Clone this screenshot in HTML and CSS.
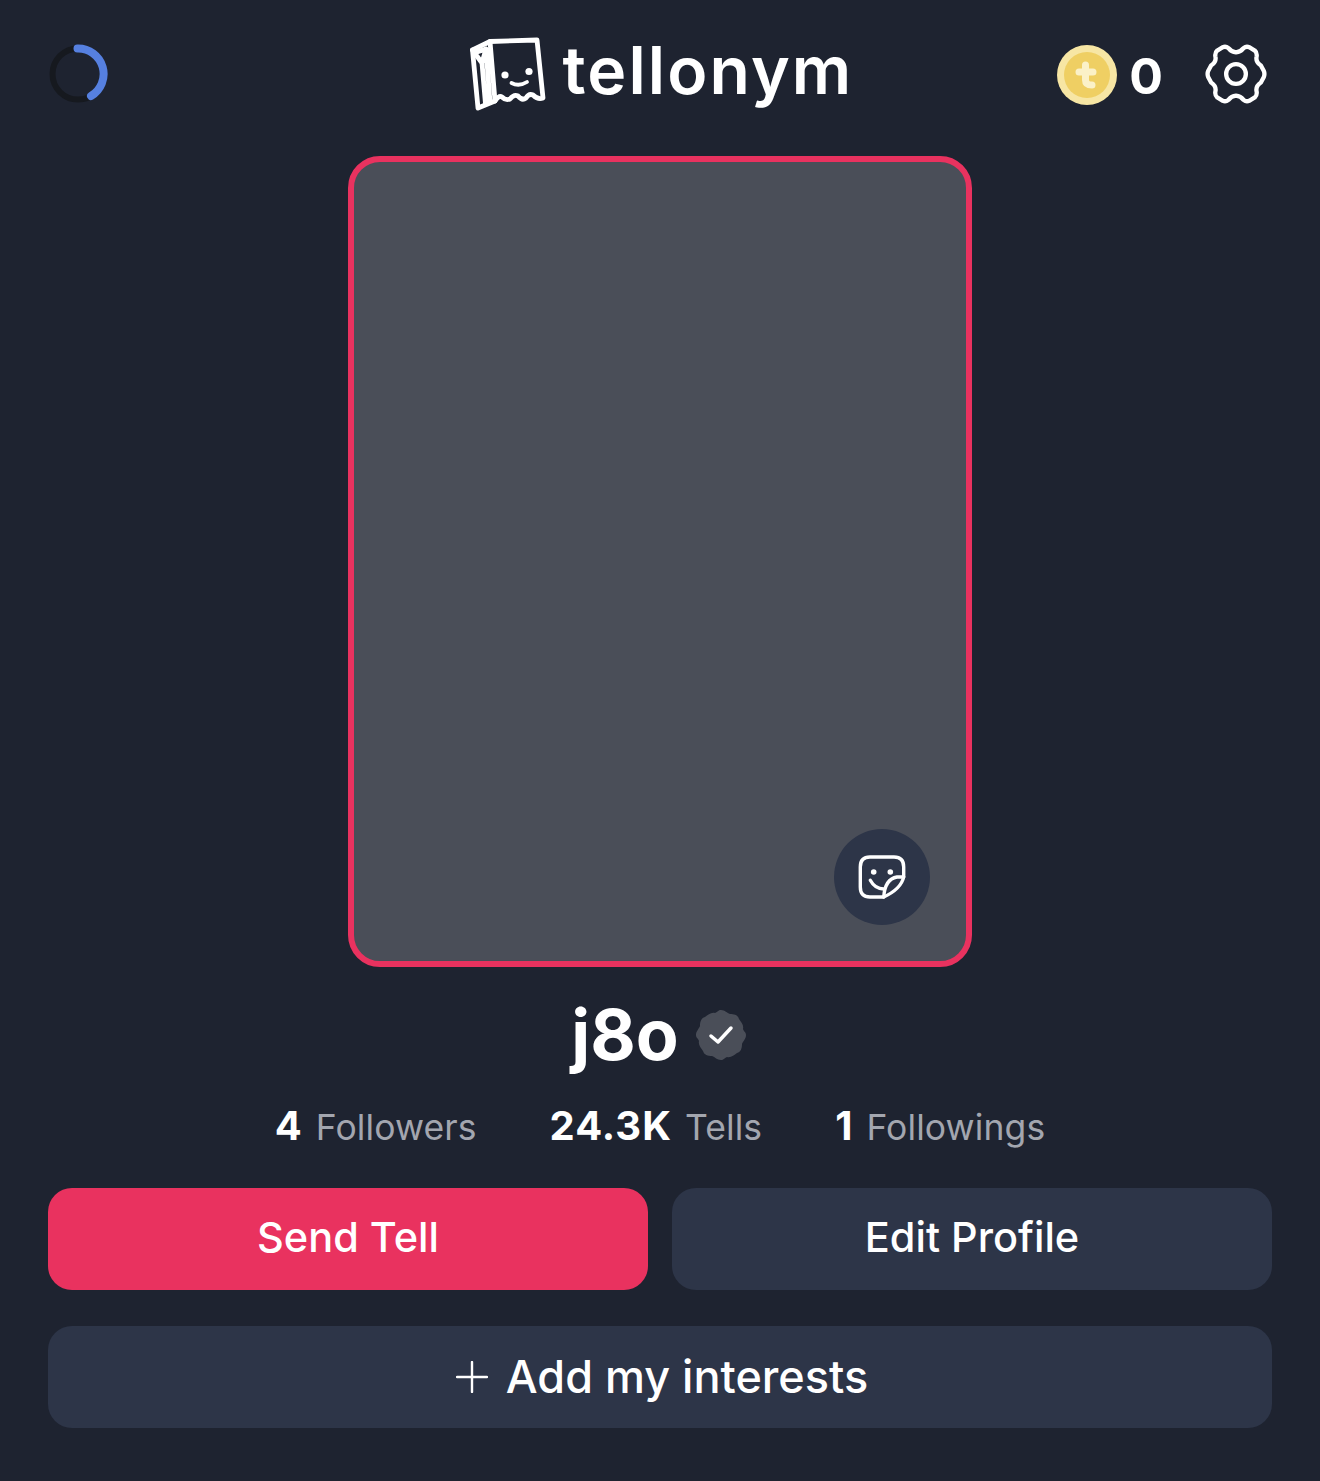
FILE: index.html
```html
<!DOCTYPE html>
<html lang="en">
<head>
<meta charset="utf-8">
<title>tellonym</title>
<link rel="stylesheet" href="styles.css">
</head>
<body>
<div class="page">
  <header class="topbar">
    <svg class="progress" width="60" height="60" viewBox="0 0 60 60" aria-hidden="true">
      <circle cx="30" cy="30" r="25.500" fill="none" stroke="#16191f" stroke-width="6"/>
      <path d="M29.500 4.500A25.500 25.500 0 0 1 43 52" fill="none" stroke="#5680e0" stroke-width="8" stroke-linecap="round"/>
    </svg>
    <div class="brand">
      <svg class="brand-mark" width="76" height="74" viewBox="0 0 76 74" aria-hidden="true">
        <g fill="none" stroke="#fff" stroke-width="4.800" stroke-linejoin="round" stroke-linecap="round">
          <path d="M2.500 13L20 4.500L67 3L73 61Q68 63 63 58Q59 56 56 61Q52 64 48 59Q44 57 40 62Q36 64 32 60Q29 58 25 64L8 71Z"/>
          <path d="M20 4.500L25 64M2.500 13L12 26L15.500 67M7 15L16 12L12 26M16 12L20 65"/>
        </g>
        <circle cx="35" cy="38" r="3.600" fill="#fff"/>
        <circle cx="59" cy="34.500" r="3.600" fill="#fff"/>
        <path d="M41.500 46Q49 50 57 45" fill="none" stroke="#fff" stroke-width="3.800" stroke-linecap="round"/>
      </svg>
      <span class="brand-name">tellonym</span>
    </div>
    <div class="wallet">
      <svg class="coin" width="60" height="60" viewBox="0 0 60 60" aria-hidden="true">
        <circle cx="30" cy="30" r="30" fill="#f7e6a4"/>
        <circle cx="30" cy="30" r="23" fill="#efcf63"/>
        <path d="M28.500 20V35Q28.500 40 35 40M22 27H36" fill="none" stroke="#fbf1c8" stroke-width="7" stroke-linecap="round"/>
      </svg>
      <span class="coin-count">0</span>
      <svg class="gear" width="62" height="62" viewBox="0 0 66 66" aria-hidden="true">
        <path d="M33 10Q38 9.500 41 5.500Q44 3 47 4.500L53 8Q55.500 10 55 14Q53.500 20 59.500 24L62.500 29.500Q64 33 62.500 36.500L59.500 42Q53.500 46 55 52Q55.500 56 53 58L47 61.500Q44 63 41 60.500Q38 56.500 33 56Q28 56.500 25 60.500Q22 63 19 61.500L13 58Q10.500 56 11 52Q12.500 46 6.500 42L3.500 36.500Q2 33 3.500 29.500L6.500 24Q12.500 20 11 14Q10.500 10 13 8L19 4.500Q22 3 25 5.500Q28 9.500 33 10Z" fill="none" stroke="#fff" stroke-width="4.600" stroke-linejoin="round"/>
        <circle cx="33" cy="33" r="10.500" fill="none" stroke="#fff" stroke-width="4.600"/>
      </svg>
    </div>
  </header>

  <main class="profile">
    <div class="photo">
      <div class="sticker-btn">
        <svg width="48" height="48" viewBox="0 0 48 48" aria-hidden="true">
          <g fill="none" stroke="#fff" stroke-width="3.400" stroke-linecap="round" stroke-linejoin="round">
            <path d="M25.700 44H12Q2.300 44 2.300 34V14Q2.300 4 12 4H36Q45.700 4 45.700 14V24H39Q27 26 25.700 44Z"/>
            <path d="M45.700 24Q43 36 25.700 44"/>
            <path d="M12.300 27.300Q17 36 25.700 36"/>
          </g>
          <circle cx="15.700" cy="19" r="2.800" fill="#fff"/>
          <circle cx="32.300" cy="19" r="2.800" fill="#fff"/>
        </svg>
      </div>
    </div>

    <div class="name-row">
      <h1 class="name">j8o</h1>
      <svg class="badge" width="50" height="50" viewBox="0 0 50 50" aria-hidden="true">
        <path d="M25 0C29 0 31 3 34 4C38 4 42 5 43 9C45 12 48 15 47 19C48 22 50 22 50 25C50 29 47 31 46 34C46 38 45 42 41 43C38 45 35 48 31 47C28 48 28 50 25 50C21 50 19 47 16 46C12 46 8 45 7 41C5 38 2 35 3 31C2 28 0 28 0 25C0 21 3 19 4 16C4 12 5 8 9 7C12 5 15 2 19 3C22 2 22 0 25 0Z" fill="#4a4e58"/>
        <path d="M15 26L22 32L35 18" fill="none" stroke="#fff" stroke-width="3.500" stroke-linecap="round" stroke-linejoin="round"/>
      </svg>
    </div>

    <div class="stats">
      <div class="stat"><b class="stat-num">4</b><span class="stat-label">Followers</span></div>
      <div class="stat"><b class="stat-num">24.3K</b><span class="stat-label">Tells</span></div>
      <div class="stat"><b class="stat-num">1</b><span class="stat-label">Followings</span></div>
    </div>

    <div class="actions">
      <button class="btn btn-primary">Send Tell</button>
      <button class="btn btn-dark">Edit Profile</button>
    </div>

    <button class="btn btn-dark btn-wide">
      <svg class="plus" width="32" height="32" viewBox="0 0 32 32" aria-hidden="true">
        <path d="M16 1V31M1 16H31" stroke="#fff" stroke-width="2.400" stroke-linecap="round"/>
      </svg>
      <span>Add my interests</span>
    </button>
  </main>
</div>
</body>
</html>
```
FILE: styles.css
```css
* { box-sizing: border-box; }
html, body { margin: 0; padding: 0; }
body {
  background: #1e2330;
  color: #fff;
  font-family: Inter, "Liberation Sans", sans-serif;
  height: 1481px;
}
.page { padding: 36px 48px 0; }
.topbar {
  display: grid;
  grid-template-columns: 1fr auto 1fr;
  align-items: center;
  height: 76px;
  padding: 0 5px 0 0;
}
.brand {
  display: flex;
  align-items: center;
  gap: 17px;
  margin-left: 8px;
}
.brand-mark { display: block; }
.brand-name {
  font-weight: 600;
  font-size: 66px;
  letter-spacing: 2.100px;
  line-height: 76px;
  margin-top: -8px;
}
.wallet {
  display: flex;
  align-items: center;
  justify-content: flex-end;
}
.coin { margin-top: 1px; }
.coin-count {
  font-weight: 700;
  font-size: 50px;
  line-height: 60px;
  margin: 3px 42px 0 12px;
}
.profile {
  display: flex;
  flex-direction: column;
  align-items: center;
  margin-top: 44px;
}
.photo {
  position: relative;
  width: 624px;
  height: 811px;
  background: #4a4e58;
  border: 6px solid #e9325f;
  border-radius: 32px;
}
.sticker-btn {
  position: absolute;
  right: 36px;
  bottom: 36px;
  width: 96px;
  height: 96px;
  border-radius: 50%;
  background: #2d3548;
  display: flex;
  align-items: center;
  justify-content: center;
}
.name-row {
  display: flex;
  align-items: center;
  gap: 17px;
  height: 70px;
  margin: 33px 3px 0 0;
}
.name {
  margin: 0;
  font-size: 70px;
  font-weight: 700;
  line-height: 70px;
}
.stats {
  display: flex;
  gap: 73px;
  margin: 31px 0 0;
  height: 48px;
  align-items: center;
}
.stat { display: flex; align-items: baseline; gap: 13px; }
.stat-num { font-size: 40px; font-weight: 700; letter-spacing: 1px; }
.stat-label { font-size: 35.500px; letter-spacing: .1px; color: #a3a6af; }
.actions {
  display: flex;
  gap: 24px;
  width: 100%;
  margin-top: 39px;
}
.btn {
  flex: 1;
  height: 102px;
  border: 0;
  border-radius: 24px;
  padding: 0 0 4px;
  color: #fff;
  font-family: inherit;
  font-size: 41.500px;
  font-weight: 500;
  display: flex;
  align-items: center;
  justify-content: center;
}
.btn-primary { background: #e9325f; }
.btn-dark { background: #2d3548; }
.btn-wide {
  flex: none;
  width: 100%;
  margin-top: 36px;
  padding: 0 0 2px 4px;
  font-size: 45px;
  gap: 18px;
}
.plus { margin-top: 2px; }
```
